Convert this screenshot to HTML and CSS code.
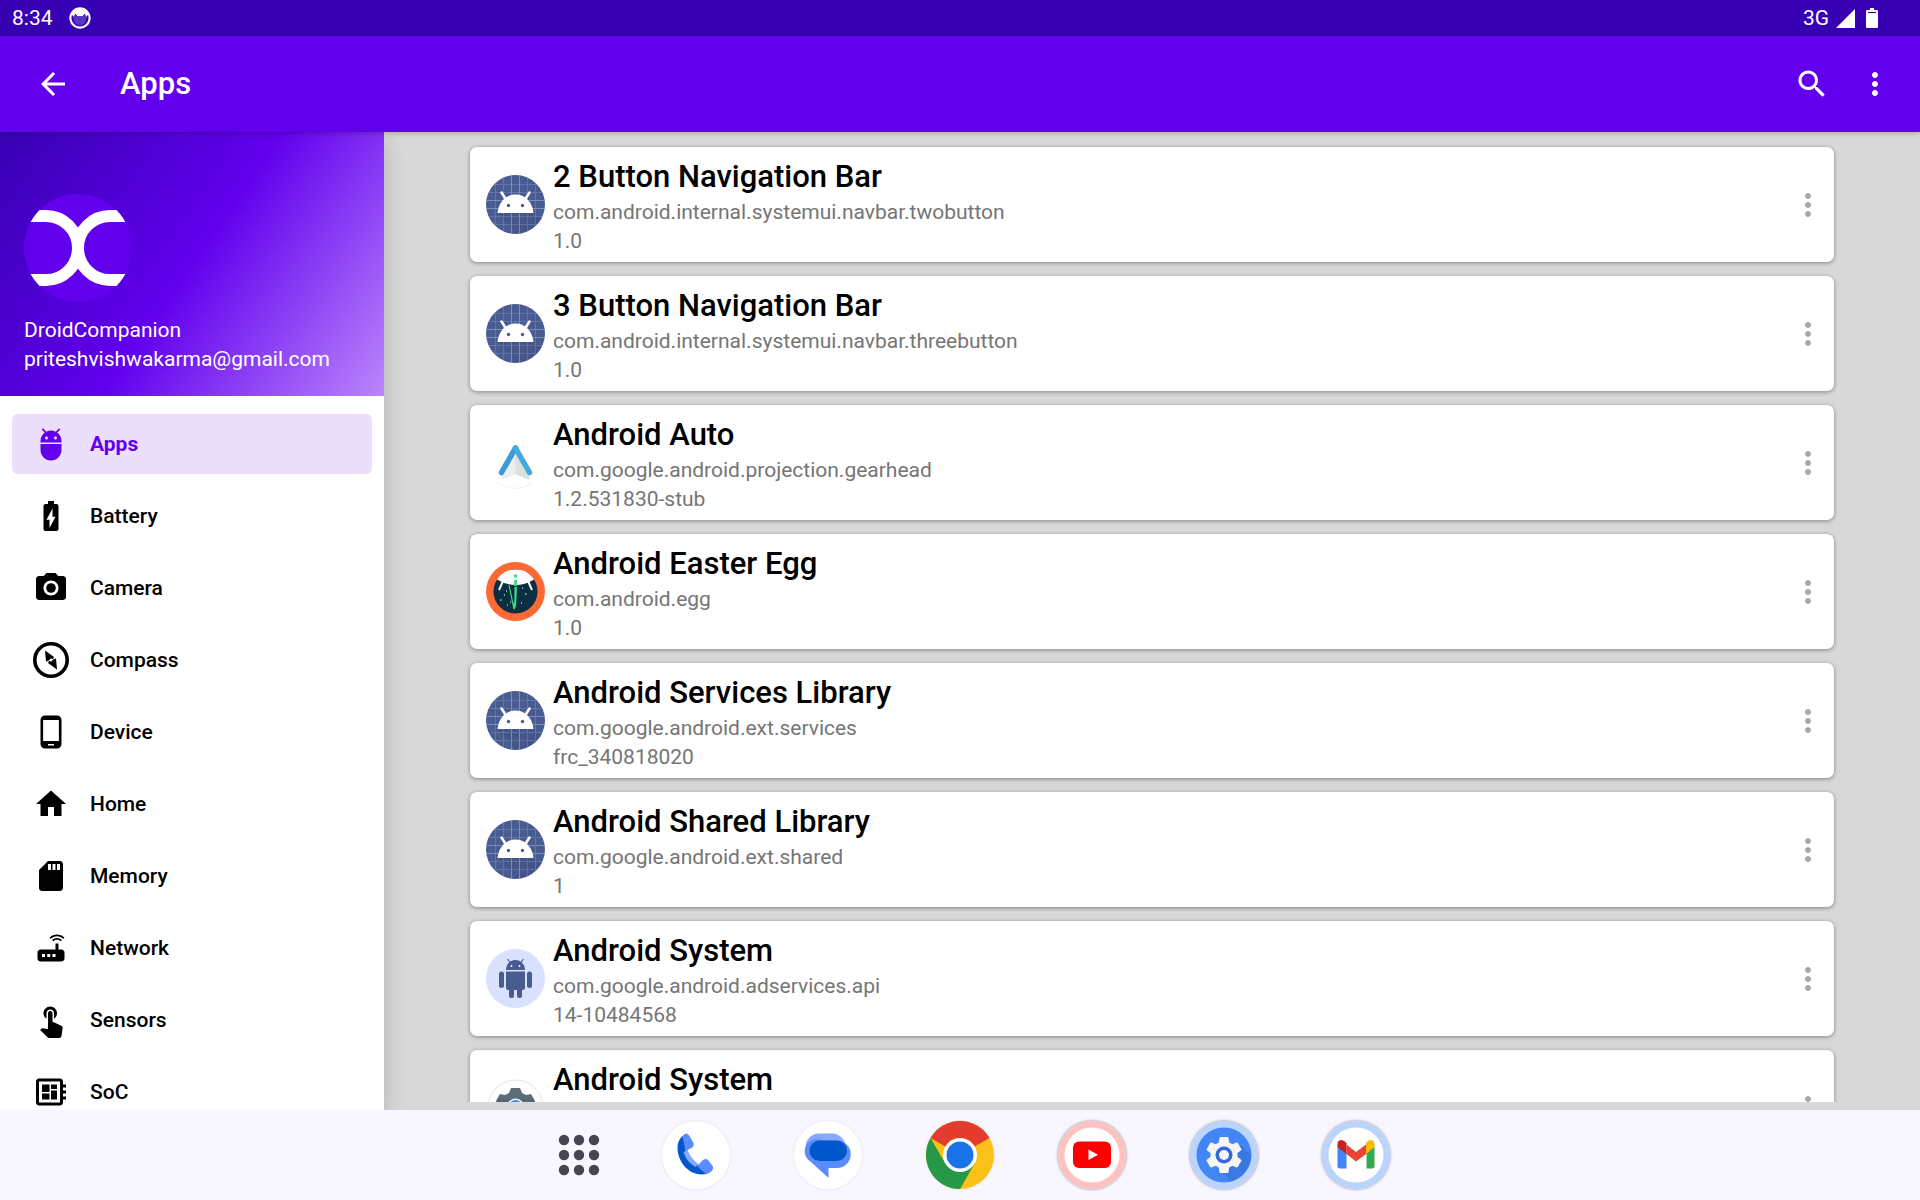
FILE: index.html
```html
<!DOCTYPE html>
<html lang="en">
<head>
<meta charset="utf-8">
<meta name="viewport" content="width=device-width, initial-scale=1">
<title>Apps</title>
<link rel="stylesheet" href="styles.css">
</head>
<body>
<svg class="defs" aria-hidden="true">
  <defs>
    <symbol id="more" viewBox="0 0 24 24"><path d="M12 8c1.100 0 2-.9 2-2s-.9-2-2-2-2 .9-2 2 .9 2 2 2zm0 2c-1.100 0-2 .9-2 2s.9 2 2 2 2-.9 2-2-.9-2-2-2zm0 6c-1.100 0-2 .9-2 2s.9 2 2 2 2-.9 2-2-.9-2-2-2z"/></symbol>
    <symbol id="droid-grid" viewBox="0 0 59 59">
      <circle cx="29.500" cy="29.500" r="29.500" fill="#495c92"/>
      <path d="M12 38h35l9 5a29.500 29.500 0 0 1-26 15z" fill="#3c4c7c" opacity=".4"/>
      <path d="M9.500 8v43M17.500 3v53M25.500 0v59M33.500 0v59M41.500 3v53M49.500 8v43M8 9.500h43M3 17.500h53M0 25.500h59M0 33.500h59M3 41.500h53M8 49.500h43" stroke="#8e9bc6" stroke-width="1" opacity=".38"/>
      <path d="M25.500 0v59M33.500 0v59M0 25.500h59M0 33.500h59" stroke="#a4b0d6" stroke-width="1" opacity=".4"/>
      <path d="M15.500 17.500l4.500 7M43.500 17.500l-4.500 7" stroke="#fff" stroke-width="2.500" stroke-linecap="round"/>
      <path d="M11.500 38C12.500 27 20 19.500 29.500 19.500S46.500 27 47.500 38z" fill="#fff"/>
      <circle cx="22.500" cy="30.500" r="1.700" fill="#495c92"/><circle cx="36.500" cy="30.500" r="1.700" fill="#495c92"/>
    </symbol>
  </defs>
</svg>

<div class="screen">
  <div class="status">
    <span class="status-text">8:34</span>
    <svg class="status-face" viewBox="0 0 24 24"><circle cx="12" cy="12" r="10.500" fill="none" stroke="#fff" stroke-width="2.200"/><path d="M3 8C6 0 18 0 21 8l-2 3-2-4-2 3H9L7 7l-2 4z" fill="#fff"/><path d="M5 11l2-3 2 2h6l2-2 2 3c0 6-3 9-7 9s-7-3-7-9z" fill="#5a35c0"/></svg>
    <span class="spacer"></span>
    <span class="status-text">3G</span>
    <svg class="signal" viewBox="0 0 19 19"><path d="M19 0v19H0z" fill="#fff"/></svg>
    <svg class="batt" viewBox="0 0 12 20"><path d="M4 0h4v2h3q1 0 1 1v16q0 1-1 1H1q-1 0-1-1V3q0-1 1-1h3z" fill="#fff"/><path d="M2 4.500h8" stroke="#3700b3" stroke-width="1"/></svg>
  </div>

  <header class="appbar">
    <button class="icon-btn" aria-label="Back"><svg viewBox="0 0 24 24"><path d="M20 11H7.830l5.590-5.590L12 4l-8 8 8 8 1.410-1.410L7.830 13H20v-2z"/></svg></button>
    <h1>Apps</h1>
    <span class="spacer"></span>
    <button class="icon-btn" aria-label="Search"><svg viewBox="0 0 24 24"><path d="M15.500 14h-.79l-.28-.27C15.410 12.590 16 11.110 16 9.500 16 5.910 13.090 3 9.500 3S3 5.910 3 9.500 5.910 16 9.500 16c1.610 0 3.090-.59 4.230-1.570l.27.28v.79l5 4.990L20.490 19l-4.990-5zm-6 0C7.010 14 5 11.990 5 9.500S7.010 5 9.500 5 14 7.010 14 9.500 11.990 14 9.500 14z"/></svg></button>
    <button class="icon-btn" aria-label="More options"><svg><use href="#more"/></svg></button>
  </header>

  <div class="body">
    <aside class="drawer">
      <div class="profile">
        <svg class="avatar" viewBox="0 0 108 108"><defs><clipPath id="round"><circle cx="54" cy="54" r="54"/></clipPath></defs><circle cx="54" cy="54" r="54" fill="#6200ee"/><path clip-path="url(#round)" d="M0 22h22a32 32 0 0 1 0 64H0M108 22H86a32 32 0 0 0 0 64H108" fill="none" stroke="#fff" stroke-width="12"/></svg>
        <p>DroidCompanion</p>
        <p>priteshvishwakarma@gmail.com</p>
      </div>
      <nav class="menu">
        <a href="#" class="item active"><svg viewBox="0 0 24 24"><path d="M5 16c0 3.870 3.130 7 7 7s7-3.130 7-7v-4H5v4zM16.120 4.370l2.100-2.100-.82-.83-2.300 2.310C14.160 3.280 13.120 3 12 3s-2.140.28-3.090.75L6.600 1.440l-.82.83 2.100 2.100C6.140 5.640 5 7.680 5 10v1h14v-1c0-2.320-1.140-4.360-2.880-5.630zM9 9c-.55 0-1-.45-1-1s.45-1 1-1 1 .45 1 1-.45 1-1 1zm6 0c-.55 0-1-.45-1-1s.45-1 1-1 1 .45 1 1-.45 1-1 1z"/></svg>Apps</a>
        <a href="#" class="item"><svg viewBox="0 0 24 24"><path d="M15.670 4H14V2h-4v2H8.330C7.600 4 7 4.600 7 5.330v15.330C7 21.400 7.600 22 8.330 22h7.330c.74 0 1.340-.6 1.340-1.330V5.330C17 4.600 16.400 4 15.670 4zM11 20v-5.500H9L13 7v5.500h2L11 20z"/></svg>Battery</a>
        <a href="#" class="item"><svg viewBox="0 0 24 24"><circle cx="12" cy="12" r="3.200"/><path d="M9 2L7.170 4H4c-1.100 0-2 .9-2 2v12c0 1.100.9 2 2 2h16c1.100 0 2-.9 2-2V6c0-1.100-.9-2-2-2h-3.170L15 2H9zm3 15c-2.760 0-5-2.240-5-5s2.240-5 5-5 5 2.240 5 5-2.240 5-5 5z"/></svg>Camera</a>
        <a href="#" class="item"><svg viewBox="0 0 36 36"><circle cx="18" cy="18" r="16.200" fill="none" stroke="#000" stroke-width="3.600"/><path d="M12 8.500l9 6.500-1 2-2.500-.5-1.500 2-3 1zM24 27.500l-9-6.500 1-2 2.500.5 1.500-2 3-1z"/></svg>Compass</a>
        <a href="#" class="item"><svg viewBox="0 0 24 24"><path d="M16 1H8C6.340 1 5 2.340 5 4v16c0 1.660 1.340 3 3 3h8c1.660 0 3-1.340 3-3V4c0-1.660-1.340-3-3-3zm-2 20h-4v-1h4v1zm3.250-3H6.750V4h10.500v14z"/></svg>Device</a>
        <a href="#" class="item"><svg viewBox="0 0 24 24"><path d="M10 20v-6h4v6h5v-8h3L12 3 2 12h3v8z"/></svg>Home</a>
        <a href="#" class="item"><svg viewBox="0 0 24 24"><path d="M18 2h-8L4.020 8 4 20c0 1.100.9 2 2 2h12c1.100 0 2-.9 2-2V4c0-1.100-.9-2-2-2zm-6 6h-2V4h2v4zm3 0h-2V4h2v4zm3 0h-2V4h2v4z"/></svg>Memory</a>
        <a href="#" class="item"><svg viewBox="0 0 24 24"><path d="M20.200 5.900l.8-.8C19.600 3.700 17.800 3 16 3s-3.600.7-5 2.100l.8.8C13 4.800 14.500 4.200 16 4.200s3 .6 4.200 1.700zm-.9.8c-.9-.9-2.100-1.400-3.300-1.400s-2.400.5-3.300 1.400l.8.8c.7-.7 1.600-1 2.500-1 .9 0 1.800.3 2.500 1l.8-.8zM19 13h-2V9h-2v4H5c-1.100 0-2 .9-2 2v4c0 1.100.9 2 2 2h14c1.100 0 2-.9 2-2v-4c0-1.100-.9-2-2-2zM8 18H6v-2h2v2zm3.500 0h-2v-2h2v2zm3.500 0h-2v-2h2v2z"/></svg>Network</a>
        <a href="#" class="item"><svg viewBox="0 0 24 24"><path d="M9 11.240V7.500C9 6.120 10.120 5 11.500 5S14 6.120 14 7.500v3.740c1.210-.81 2-2.180 2-3.740C16 5.010 13.990 3 11.500 3S7 5.010 7 7.500c0 1.560.79 2.930 2 3.740zm9.840 4.630l-4.540-2.260c-.17-.07-.35-.11-.54-.11H13v-6c0-.83-.67-1.500-1.500-1.500S10 6.670 10 7.500v10.740l-3.430-.72c-.08-.01-.15-.03-.24-.03-.31 0-.59.13-.79.33l-.79.8 4.940 4.940c.27.27.65.44 1.060.44h6.790c.75 0 1.330-.55 1.440-1.280l.75-5.270c.01-.07.02-.14.02-.2 0-.62-.38-1.160-.91-1.380z"/></svg>Sensors</a>
        <a href="#" class="item"><svg viewBox="0 0 24 24"><path d="M22 9V7h-2V5c0-1.100-.9-2-2-2H4c-1.100 0-2 .9-2 2v14c0 1.100.9 2 2 2h14c1.100 0 2-.9 2-2v-2h2v-2h-2v-2h2v-2h-2V9h2zm-4 10H4V5h14v14zM6 13h5v4H6zm6-6h4v3h-4zM6 7h5v5H6zm6 4h4v6h-4z"/></svg>SoC</a>
      </nav>
    </aside>

    <main class="content">
      <ul class="list">
        <li class="card"><svg class="app-icon"><use href="#droid-grid"/></svg><div class="info"><h2>2 Button Navigation Bar</h2><p>com.android.internal.systemui.navbar.twobutton</p><p>1.0</p></div><button class="icon-btn" aria-label="More"><svg><use href="#more"/></svg></button></li>
        <li class="card"><svg class="app-icon"><use href="#droid-grid"/></svg><div class="info"><h2>3 Button Navigation Bar</h2><p>com.android.internal.systemui.navbar.threebutton</p><p>1.0</p></div><button class="icon-btn" aria-label="More"><svg><use href="#more"/></svg></button></li>
        <li class="card"><svg class="app-icon" viewBox="0 0 59 59"><path d="M29.500 20L44 45l-1.500 1.500-13-5.500-13 5.500L15 45z" fill="#ededed"/><path d="M29.500 20L44 45l-1.500 1.500-13-5.500z" fill="#dcdedf"/><path d="M12 49a27 27 0 0 0 35 0" fill="none" stroke="#f1f1f1" stroke-width="1"/><path d="M15.500 39.500L29.500 15" stroke="#3b9bd8" stroke-width="5.500" stroke-linecap="round" fill="none"/><path d="M43.500 39.500L29.500 15" stroke="#45aae0" stroke-width="5.500" stroke-linecap="round" fill="none"/></svg><div class="info"><h2>Android Auto</h2><p>com.google.android.projection.gearhead</p><p>1.2.531830-stub</p></div><button class="icon-btn" aria-label="More"><svg><use href="#more"/></svg></button></li>
        <li class="card"><svg class="app-icon" viewBox="0 0 59 59"><circle cx="29.500" cy="29.500" r="29.500" fill="#fb6a34"/><circle cx="29.500" cy="29.500" r="22" fill="#0a2f42"/><path d="M11 17.500A22 22 0 0 1 48 17.500Q39 23 29.500 23T11 17.500z" fill="#fff"/><path d="M17 19l-4 9M42 19l4 9" stroke="#fff" stroke-width="2"/><path d="M29.500 12.500v3M29.500 18v6" stroke="#3ddc84" stroke-width="3"/><path d="M29.500 25v12l-1.500 10-5-24" fill="none" stroke="#3ddc84" stroke-width="1.200"/><path d="M28.500 25h2.500L30 44l-1.500 4-2-8 2 2z" fill="#3ddc84"/><path d="M14 38h1.500M20 29h1M39 32h1.500M35 41h1M44 24h1M18 33h1M36 26h1M24 40h1M21 43h1" stroke="#fff" stroke-width="1.200"/></svg><div class="info"><h2>Android Easter Egg</h2><p>com.android.egg</p><p>1.0</p></div><button class="icon-btn" aria-label="More"><svg><use href="#more"/></svg></button></li>
        <li class="card"><svg class="app-icon"><use href="#droid-grid"/></svg><div class="info"><h2>Android Services Library</h2><p>com.google.android.ext.services</p><p>frc_340818020</p></div><button class="icon-btn" aria-label="More"><svg><use href="#more"/></svg></button></li>
        <li class="card"><svg class="app-icon"><use href="#droid-grid"/></svg><div class="info"><h2>Android Shared Library</h2><p>com.google.android.ext.shared</p><p>1</p></div><button class="icon-btn" aria-label="More"><svg><use href="#more"/></svg></button></li>
        <li class="card"><svg class="app-icon" viewBox="0 0 59 59"><circle cx="29.500" cy="29.500" r="29.500" fill="#dae1ff"/><g fill="#495c92"><path d="M20 21c0-5.500 4-10 9.500-10s9.500 4.500 9.500 10z"/><path d="M20 22.500h19V39q0 2-2 2H22q-2 0-2-2z"/><rect x="13" y="22.500" width="5" height="16.500" rx="2.500"/><rect x="41" y="22.500" width="5" height="16.500" rx="2.500"/><rect x="23" y="36" width="5" height="13" rx="2"/><rect x="31" y="36" width="5" height="13" rx="2"/></g><path d="M21.500 10l3 4M37.500 10l-3 4" stroke="#495c92" stroke-width="1.200"/><circle cx="25.500" cy="17" r=".9" fill="#fff"/><circle cx="33.500" cy="17" r=".9" fill="#fff"/></svg><div class="info"><h2>Android System</h2><p>com.google.android.adservices.api</p><p>14-10484568</p></div><button class="icon-btn" aria-label="More"><svg><use href="#more"/></svg></button></li>
        <li class="card"><svg class="app-icon" viewBox="0 0 59 59"><circle cx="29.500" cy="29.500" r="27.500" fill="#fff" stroke="#e6e6e6"/><path d="M25 10h9l2 5 4 2 5-1 3 5-1 3H12l-1-3 3-5 5 1 4-2z" fill="#5b6e78"/><path d="M11 21h37l3 8H8z" fill="#566973"/><circle cx="29.500" cy="29.500" r="9" fill="#fff"/><circle cx="29.500" cy="29.500" r="7.500" fill="#4285f4"/></svg><div class="info"><h2>Android System</h2></div><button class="icon-btn" aria-label="More"><svg><use href="#more"/></svg></button></li>
      </ul>
    </main>
  </div>

  <footer class="dock">
    <button class="grid-btn" aria-label="All apps"><svg viewBox="0 0 42 42" fill="#464652"><circle cx="6" cy="6" r="5.200"/><circle cx="21" cy="6" r="5.200"/><circle cx="36" cy="6" r="5.200"/><circle cx="6" cy="21" r="5.200"/><circle cx="21" cy="21" r="5.200"/><circle cx="36" cy="21" r="5.200"/><circle cx="6" cy="36" r="5.200"/><circle cx="21" cy="36" r="5.200"/><circle cx="36" cy="36" r="5.200"/></svg></button>
    <button class="dock-app soft" aria-label="Phone"><svg viewBox="0 0 68 68"><circle cx="34" cy="34" r="34" fill="#fff"/><path d="M22 14Q15.500 18 15.500 27C16 42 27 53.500 40 53.500Q45 53.500 48 51L36 44Q26 38 24 29z" fill="#0057cc"/><path d="M21.500 31l4-2q3 8 11 14l-3 3q-9-5-12-15z" fill="#86a9ff"/><path d="M20.500 15q4-5 7 0l4 7q1 3-2 5l-6 3z" fill="#5a8cff"/><path d="M35 45l6-6q3-2 5 0l4 5q3 4-2 7.500l-4 1.500z" fill="#5a8cff"/></svg></button>
    <button class="dock-app soft" aria-label="Messages"><svg viewBox="0 0 68 68"><circle cx="34" cy="34" r="34" fill="#fff"/><rect x="11.500" y="12.500" width="40" height="27" rx="13.500" fill="#86a9ff"/><path d="M29 19.500h14a13.500 13.500 0 0 1 0 27.500h-8.500v10L17 41a12 12 0 0 1 12-21.500z" fill="#5a8cff"/><rect x="15.500" y="19.500" width="37.500" height="20.500" rx="10.200" fill="#0057cc"/></svg></button>
    <button class="dock-app soft" aria-label="Chrome"><svg viewBox="0 0 68 68"><circle cx="34" cy="34" r="34" fill="#fbc116"/><path d="M34 34L4.550 17A34 34 0 0 1 63.450 17z" fill="#e33b2e"/><path d="M34 34L48.700 42.500 34 68A34 34 0 0 1 4.550 17L19.300 42.500z" fill="#279847"/><circle cx="34" cy="34" r="17" fill="#fff"/><circle cx="34" cy="34" r="13.500" fill="#1a73e8"/></svg></button>
    <button class="dock-app ring" aria-label="YouTube"><svg viewBox="0 0 68 68"><circle cx="34" cy="34" r="34" fill="#ffc2c1"/><circle cx="34" cy="34" r="27.500" fill="#fff"/><rect x="15" y="20.500" width="38" height="26.500" rx="6" fill="#f00"/><path d="M30.500 28.500l9.500 5.300-9.500 5.300z" fill="#fff"/></svg></button>
    <button class="dock-app ring" aria-label="Settings"><svg viewBox="0 0 68 68"><circle cx="34" cy="34" r="34" fill="#bbd4fd"/><circle cx="34" cy="34" r="27.500" fill="#4285f4"/><path d="M51 24L61 34a27.500 27.500 0 0 1-21 26.500l-6-9z" fill="#3a78e4"/><path transform="translate(11.500 11.500) scale(1.875)" d="M19.140 12.940c.04-.3.06-.61.06-.94 0-.32-.02-.64-.07-.94l2.030-1.580c.18-.14.23-.41.12-.61l-1.920-3.320c-.12-.22-.37-.29-.59-.22l-2.390.96c-.5-.38-1.030-.7-1.620-.94l-.36-2.540c-.04-.24-.24-.41-.48-.41h-3.840c-.24 0-.43.17-.47.41l-.36 2.540c-.59.24-1.130.57-1.620.94l-2.390-.96c-.22-.08-.47 0-.59.22L2.740 8.870c-.12.21-.08.47.12.61l2.030 1.580c-.05.3-.09.63-.09.94s.02.64.07.94l-2.030 1.580c-.18.14-.23.41-.12.61l1.920 3.320c.12.22.37.29.59.22l2.390-.96c.5.38 1.030.7 1.620.94l.36 2.540c.05.24.24.41.48.41h3.840c.24 0 .44-.17.47-.41l.36-2.540c.59-.24 1.130-.56 1.620-.94l2.390.96c.22.08.47 0 .59-.22l1.920-3.320c.12-.22.07-.47-.12-.61l-2.010-1.580z" fill="#f5f5f5"/><circle cx="34" cy="34" r="8.500" fill="#3367d6"/><circle cx="34" cy="34" r="5" fill="#f5f5f5"/></svg></button>
    <button class="dock-app ring" aria-label="Gmail"><svg viewBox="0 0 68 68"><circle cx="34" cy="34" r="34" fill="#bbd4fd"/><circle cx="34" cy="34" r="27.500" fill="#fff"/><path d="M15.500 25l9 7v15.500H18q-2.500 0-2.500-2.500z" fill="#4285f4"/><path d="M52.500 25l-8 7v15.500H50q2.500 0 2.500-2.500z" fill="#34a853"/><path d="M24.500 23.500L34 31l10-7.500V33L34 40.500 24.500 33z" fill="#ea4335"/><path d="M15.500 26v-3c0-4 4-5 6.500-3l2.500 2v11z" fill="#c5221f"/><path d="M52.500 26v-3c0-4-4-5-6.500-3L44 21.800V33z" fill="#fbbc04"/></svg></button>
  </footer>
</div>
</body>
</html>
```
FILE: styles.css
```css
* { box-sizing: border-box; margin: 0; padding: 0; }
body { font-family: Roboto, "Noto Sans", sans-serif; font-size: 21px; color: #000; background: #d8d8d8; }
button { border: 0; background: none; display: block; cursor: pointer; }
a { color: inherit; text-decoration: none; }
svg { display: block; flex: none; }
.defs { position: absolute; width: 0; height: 0; }
.spacer { flex: 1; }

.screen { height: 100vh; display: flex; flex-direction: column; overflow: hidden; }

.status { flex: none; height: 36px; padding: 0 42px 0 12px; display: flex; align-items: center; background: #3700b3; color: #fff; }
.status-text { line-height: 36px; }
.status-face { width: 22px; height: 22px; margin-left: 16px; }
.signal { width: 19px; height: 19px; margin: 0 11px 0 7px; }
.batt { width: 12px; height: 20px; }

.appbar { flex: none; height: 96px; padding: 0 27px 0 35px; display: flex; align-items: center; background: #6200ee; color: #fff; box-shadow: 0 1px 6px rgba(0, 0, 0, .25); z-index: 2; }
.appbar h1 { margin-left: 49px; font-size: 31px; font-weight: 500; line-height: 40px; }
.icon-btn { flex: none; width: 36px; height: 36px; color: inherit; }
.icon-btn svg { width: 36px; height: 36px; fill: currentColor; }
.icon-btn + .icon-btn { margin-left: 27px; }

.body { flex: 1; min-height: 0; display: flex; overflow: hidden; }

.drawer { flex: none; width: 384px; overflow: hidden; background: #fff; box-shadow: 0 8px 20px rgba(0, 0, 0, .18); z-index: 1; }
.profile { height: 264px; padding: 62px 24px 0; color: #fff; background: linear-gradient(124.5deg, #3700b3, #6200ee 50%, #bb86fc); }
.avatar { width: 108px; height: 108px; margin-bottom: 14px; }
.profile p { line-height: 29px; }

.menu { padding: 18px 12px 0; display: flex; flex-direction: column; gap: 12px; }
.item { height: 60px; padding-left: 21px; display: flex; align-items: center; gap: 21px; border-radius: 6px; font-weight: 500; }
.item svg { width: 36px; height: 36px; fill: currentColor; }
.item.active { background: #ecdffc; color: #6200ee; font-weight: 700; }

.content { flex: 1; min-width: 0; padding-bottom: 8px; display: flex; background: #d8d8d8; }
.list { flex: 1; min-width: 0; overflow: hidden; padding: 15px 86px 0; display: flex; flex-direction: column; gap: 14px; list-style: none; }
.card { flex: none; min-height: 115px; padding: 0 8px 0 16px; display: flex; align-items: center; background: #fff; border-radius: 7px; box-shadow: 0 1px 4px rgba(0, 0, 0, .4); }
.app-icon { width: 59px; height: 59px; }
.info { flex: 1; min-width: 0; align-self: flex-start; padding-top: 9px; margin-left: 8px; color: #757575; }
.info h2 { font-size: 31px; font-weight: 500; line-height: 42px; color: #000; }
.info p { line-height: 29px; }
.card .icon-btn { color: #a8a8a8; }

.dock { flex: none; height: 90px; padding-left: 27px; display: flex; justify-content: center; align-items: center; gap: 64px; background: #f8f7ff; }
.grid-btn { width: 42px; height: 42px; margin-right: -2px; }
.dock-app { width: 68px; height: 68px; border-radius: 50%; }
.dock-app.soft { box-shadow: 0 0 3px rgba(0, 0, 0, .12); }
.dock-app.ring { box-shadow: 0 0 3px rgba(0, 0, 0, .5); }
```
